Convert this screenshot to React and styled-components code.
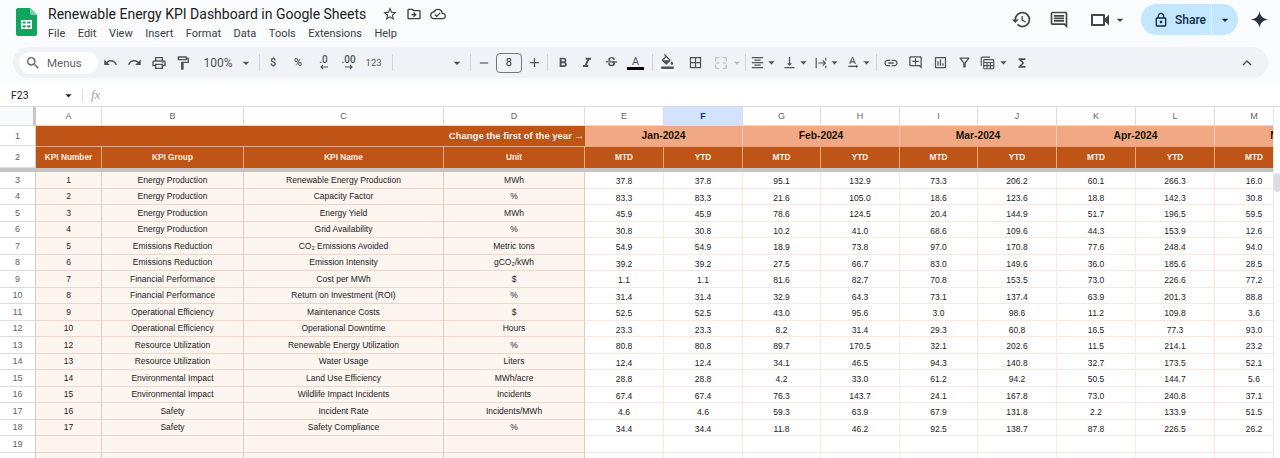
import styled, { createGlobalStyle } from "styled-components";
import {
  MdAdd,
  MdArrowDropDown,
  MdBorderAll,
  MdExpandLess,
  MdFormatAlignCenter,
  MdFormatBold,
  MdFormatColorFill,
  MdFormatItalic,
  MdFunctions,
  MdHistory,
  MdLink,
  MdLockOutline,
  MdOutlineAddComment,
  MdOutlineCloudDone,
  MdOutlineComment,
  MdOutlineDriveFileMove,
  MdOutlineFilterAlt,
  MdOutlineFormatPaint,
  MdOutlineInsertChart,
  MdOutlinePrint,
  MdOutlineStarBorder,
  MdOutlineTextRotationNone,
  MdOutlineVideocam,
  MdRedo,
  MdRemove,
  MdSearch,
  MdStrikethroughS,
  MdUndo,
  MdVerticalAlignBottom,
} from "react-icons/md";

const MENUS = ["File", "Edit", "View", "Insert", "Format", "Data", "Tools", "Extensions", "Help"];
const COLUMNS = ["A", "B", "C", "D", "E", "F", "G", "H", "I", "J", "K", "L", "M"];
const MONTHS = ["Jan-2024", "Feb-2024", "Mar-2024", "Apr-2024", "May-2024"];
const KPI_HEADS = ["KPI Number", "KPI Group", "KPI Name", "Unit"];

const ROWS = [
  [1, "Energy Production", "Renewable Energy Production", "MWh", "37.8 37.8 95.1 132.9 73.3 206.2 60.1 266.3 16.0"],
  [2, "Energy Production", "Capacity Factor", "%", "83.3 83.3 21.6 105.0 18.6 123.6 18.8 142.3 30.8"],
  [3, "Energy Production", "Energy Yield", "MWh", "45.9 45.9 78.6 124.5 20.4 144.9 51.7 196.5 59.5"],
  [4, "Energy Production", "Grid Availability", "%", "30.8 30.8 10.2 41.0 68.6 109.6 44.3 153.9 12.6"],
  [5, "Emissions Reduction", "CO₂ Emissions Avoided", "Metric tons", "54.9 54.9 18.9 73.8 97.0 170.8 77.6 248.4 94.0"],
  [6, "Emissions Reduction", "Emission Intensity", "gCO₂/kWh", "39.2 39.2 27.5 66.7 83.0 149.6 36.0 185.6 28.5"],
  [7, "Financial Performance", "Cost per MWh", "$", "1.1 1.1 81.6 82.7 70.8 153.5 73.0 226.6 77.2"],
  [8, "Financial Performance", "Return on Investment (ROI)", "%", "31.4 31.4 32.9 64.3 73.1 137.4 63.9 201.3 88.8"],
  [9, "Operational Efficiency", "Maintenance Costs", "$", "52.5 52.5 43.0 95.6 3.0 98.6 11.2 109.8 3.6"],
  [10, "Operational Efficiency", "Operational Downtime", "Hours", "23.3 23.3 8.2 31.4 29.3 60.8 16.5 77.3 93.0"],
  [12, "Resource Utilization", "Renewable Energy Utilization", "%", "80.8 80.8 89.7 170.5 32.1 202.6 11.5 214.1 23.2"],
  [13, "Resource Utilization", "Water Usage", "Liters", "12.4 12.4 34.1 46.5 94.3 140.8 32.7 173.5 52.1"],
  [14, "Environmental Impact", "Land Use Efficiency", "MWh/acre", "28.8 28.8 4.2 33.0 61.2 94.2 50.5 144.7 5.6"],
  [15, "Environmental Impact", "Wildlife Impact Incidents", "Incidents", "67.4 67.4 76.3 143.7 24.1 167.8 73.0 240.8 37.1"],
  [16, "Safety", "Incident Rate", "Incidents/MWh", "4.6 4.6 59.3 63.9 67.9 131.8 2.2 133.9 51.5"],
  [17, "Safety", "Safety Compliance", "%", "34.4 34.4 11.8 46.2 92.5 138.7 87.8 226.5 26.2"],
];

const SheetsLogo = () => (
  <svg width="21" height="28" viewBox="0 0 21 28">
    <path d="M2 0h12l7 7v19a2 2 0 0 1-2 2H2a2 2 0 0 1-2-2V2a2 2 0 0 1 2-2z" fill="#0fa55f" />
    <path d="M14 0l7 7h-5a2 2 0 0 1-2-2z" fill="#7fd0a6" />
    <path d="M5 12h11v9H5zM6.600 13.500v2.100h3.100v-2.100zm4.700 0v2.100h3.100v-2.100zm-4.700 3.700v2.300h3.100v-2.300zm4.700 0v2.300h3.100v-2.300z" fill="#fff" fillRule="evenodd" />
  </svg>
);

const Sparkle = () => (
  <svg width="17" height="17" viewBox="0 0 20 20">
    <path d="M10 0c.7 5.600 3.900 9 10 10-6.100 1-9.300 4.400-10 10-.7-5.600-3.900-9-10-10 6.100-1 9.300-4.400 10-10z" fill="#2a3440" />
  </svg>
);

const MergeIcon = () => (
  <svg width="14" height="14" viewBox="0 0 16 16" fill="none" stroke="#b9bcc0" strokeWidth="1.300">
    <path d="M6 2H2v4M10 2h4v4M6 14H2v-4M10 14h4v-4M2 8h4M10 8h4" />
  </svg>
);

const WrapIcon = () => (
  <svg width="14" height="14" viewBox="0 0 16 16" fill="none" stroke="#505356" strokeWidth="1.300">
    <path d="M2.500 2v12M13.500 2v3M13.500 11v3M5 8h8M10 5l3 3-3 3" />
  </svg>
);

const CalcIcon = () => (
  <svg width="15" height="15" viewBox="0 0 18 18" fill="none" stroke="#505356" strokeWidth="1.400">
    <path d="M1.500 13V3.500a1 1 0 0 1 1-1H12" />
    <rect x="4.500" y="5.500" width="12" height="11" rx="1" />
    <path d="M4.500 9h12M8.500 9v7.500M12.500 9v7.500M4.500 12.700h12" />
  </svg>
);

const ArrowLeftSmall = () => (
  <svg width="10" height="6" viewBox="0 0 10 6" fill="none" stroke="#505356" strokeWidth="1.100">
    <path d="M9 3H2M4 1L2 3l2 2" />
  </svg>
);

const ArrowRightSmall = () => (
  <svg width="10" height="6" viewBox="0 0 10 6" fill="none" stroke="#505356" strokeWidth="1.100">
    <path d="M1 3h7M6 1l2 2-2 2" />
  </svg>
);

const App = () => {
  return (
    <Page>
      <GlobalStyle />
      <Chrome>
        <TitleBar>
          <LogoSlot>
            <SheetsLogo />
          </LogoSlot>
          <TitleBlock>
            <TitleRow>
              <DocTitle>Renewable Energy KPI Dashboard in Google Sheets</DocTitle>
              <TitleIcons>
                <MdOutlineStarBorder size={16} />
                <MdOutlineDriveFileMove size={16} />
                <MdOutlineCloudDone size={16} />
              </TitleIcons>
            </TitleRow>
            <MenuBar>
              {MENUS.map((menu) => (
                <MenuItem key={menu}>{menu}</MenuItem>
              ))}
            </MenuBar>
          </TitleBlock>
          <Actions>
            <ActionIcon>
              <MdHistory size={21} />
            </ActionIcon>
            <ActionIcon>
              <MdOutlineComment size={20} />
            </ActionIcon>
            <MeetButton>
              <MdOutlineVideocam size={24} />
              <MdArrowDropDown size={16} />
            </MeetButton>
            <ShareButton>
              <ShareMain>
                <MdLockOutline size={16} />
                <span>Share</span>
              </ShareMain>
              <ShareCaret>
                <MdArrowDropDown size={16} />
              </ShareCaret>
            </ShareButton>
            <SparkleSlot>
              <Sparkle />
            </SparkleSlot>
          </Actions>
        </TitleBar>

        <Toolbar>
          <SearchPill>
            <MdSearch size={16} />
            <span>Menus</span>
          </SearchPill>
          <ToolBtn><MdUndo size={15} /></ToolBtn>
          <ToolBtn><MdRedo size={15} /></ToolBtn>
          <ToolBtn><MdOutlinePrint size={16} /></ToolBtn>
          <ToolBtn><MdOutlineFormatPaint size={16} /></ToolBtn>
          <ZoomLabel>100%</ZoomLabel>
          <Caret $w={16}><MdArrowDropDown size={16} /></Caret>
          <Divider />
          <ToolText $w={25}>$</ToolText>
          <ToolText $w={25}>%</ToolText>
          <Decimal $w={26}>
            <span>.0</span>
            <ArrowLeftSmall />
          </Decimal>
          <Decimal $w={24}>
            <span>.00</span>
            <ArrowRightSmall />
          </Decimal>
          <ToolText $w={26} $small>123</ToolText>
          <Divider />
          <FontPicker>
            <MdArrowDropDown size={16} />
          </FontPicker>
          <Divider />
          <ToolBtn><MdRemove size={14} /></ToolBtn>
          <SizeBox>8</SizeBox>
          <ToolBtn><MdAdd size={15} /></ToolBtn>
          <Divider $left={1} $right={2} />
          <ToolBtn><MdFormatBold size={16} /></ToolBtn>
          <ToolBtn><MdFormatItalic size={16} /></ToolBtn>
          <ToolBtn><MdStrikethroughS size={15} /></ToolBtn>
          <ToolBtn><ColorA>A</ColorA></ToolBtn>
          <Divider $left={4} />
          <ToolBtn $w={28}>
            <FillStack>
              <MdFormatColorFill size={15} />
              <FillBar />
            </FillStack>
          </ToolBtn>
          <ToolBtn $w={28}><MdBorderAll size={15} /></ToolBtn>
          <ToolBtn $w={22}><MergeIcon /></ToolBtn>
          <Caret $w={10} $off><MdArrowDropDown size={14} /></Caret>
          <Divider $left={3} $right={2} />
          <ToolBtn $w={20}><MdFormatAlignCenter size={15} /></ToolBtn>
          <PairCaret><MdArrowDropDown size={15} /></PairCaret>
          <ToolBtn $w={20}><MdVerticalAlignBottom size={15} /></ToolBtn>
          <PairCaret><MdArrowDropDown size={15} /></PairCaret>
          <ToolBtn $w={20}><WrapIcon /></ToolBtn>
          <PairCaret><MdArrowDropDown size={15} /></PairCaret>
          <ToolBtn $w={20}><MdOutlineTextRotationNone size={15} /></ToolBtn>
          <PairCaret><MdArrowDropDown size={15} /></PairCaret>
          <Divider $left={2} $right={2} />
          <ToolBtn><MdLink size={16} /></ToolBtn>
          <ToolBtn><MdOutlineAddComment size={15} /></ToolBtn>
          <ToolBtn><MdOutlineInsertChart size={15} /></ToolBtn>
          <ToolBtn><MdOutlineFilterAlt size={15} /></ToolBtn>
          <ToolBtn $w={21}><CalcIcon /></ToolBtn>
          <Caret $w={12}><MdArrowDropDown size={15} /></Caret>
          <ToolBtn $w={24}><MdFunctions size={14} /></ToolBtn>
          <ToolbarEnd>
            <MdExpandLess size={18} />
          </ToolbarEnd>
        </Toolbar>
      </Chrome>

      <FormulaBar>
        <NameBox>
          <span>F23</span>
          <MdArrowDropDown size={15} />
        </NameBox>
        <FormulaDivider />
        <FxMark>fx</FxMark>
      </FormulaBar>

      <SheetArea>
        <Viewport>
          <Grid>
            <Corner />
            {COLUMNS.map((col) => (
              <ColHead key={col} $active={col === "F"}>
                {col}
              </ColHead>
            ))}
            <ColHead />

            <RowHead>1</RowHead>
            <ChangeCell>Change the first of the year →</ChangeCell>
            {MONTHS.map((month) => (
              <MonthCell key={month}>{month}</MonthCell>
            ))}

            <RowHead>2</RowHead>
            {KPI_HEADS.map((head) => (
              <HeadCell key={head}>{head}</HeadCell>
            ))}
            {COLUMNS.slice(4).map((col, i) => (
              <HeadCell key={col}>{i % 2 === 0 ? "MTD" : "YTD"}</HeadCell>
            ))}
            <HeadCell />

            <FreezeBand />

            {ROWS.map((row, i) => (
              <DataRow key={row[0]} rowNumber={i + 3} row={row} />
            ))}
            <EmptyRow rowNumber={19} />
            <EmptyRow />
          </Grid>
        </Viewport>
        <ScrollRail>
          <ScrollThumb />
        </ScrollRail>
      </SheetArea>
    </Page>
  );
};

const DataRow = ({ rowNumber, row }) => {
  const [kpi, group, name, unit, values] = row;
  return (
    <>
      <RowHead>{rowNumber}</RowHead>
      <KpiCell>{kpi}</KpiCell>
      <KpiCell>{group}</KpiCell>
      <KpiCell>{name}</KpiCell>
      <KpiCell>{unit}</KpiCell>
      {values.split(" ").map((value, i) => (
        <ValueCell key={COLUMNS[i + 4]}>{value}</ValueCell>
      ))}
      <ValueCell />
    </>
  );
};

const EmptyRow = ({ rowNumber }) => (
  <>
    <RowHead>{rowNumber}</RowHead>
    {COLUMNS.slice(0, 4).map((col) => (
      <KpiCell key={col} />
    ))}
    {COLUMNS.slice(4).map((col) => (
      <ValueCell key={col} />
    ))}
    <ValueCell />
  </>
);

export default App;

const GlobalStyle = createGlobalStyle`
  html, body {
    margin: 0;
    padding: 0;
    background: #fff;
  }
  * {
    box-sizing: border-box;
  }
`;

const Page = styled.div`
  width: 1280px;
  height: 458px;
  overflow: hidden;
  background: #fff;
  font-family: "Roboto", sans-serif;
  color: #1f1f1f;
`;

const Chrome = styled.div`
  height: 84px;
  background: #f9fbfd;
`;

const TitleBar = styled.div`
  height: 47px;
  display: flex;
`;

const LogoSlot = styled.div`
  width: 48px;
  padding: 8px 0 0 16px;
`;

const TitleBlock = styled.div`
  display: flex;
  flex-direction: column;
  padding-top: 4px;
`;

const TitleRow = styled.div`
  display: flex;
  align-items: center;
  height: 20px;
`;

const DocTitle = styled.div`
  width: 321px;
  font-size: 14px;
  white-space: nowrap;
  color: #202124;
`;

const TitleIcons = styled.div`
  display: flex;
  gap: 8px;
  margin-left: 13px;
  color: #3c4043;
`;

const MenuBar = styled.div`
  display: flex;
  gap: 12.500px;
  height: 18px;
  align-items: center;
`;

const MenuItem = styled.span`
  font-size: 11px;
  color: #3c4043;
`;

const Actions = styled.div`
  margin-left: auto;
  display: flex;
  align-items: flex-start;
  padding: 4px 6px 0 0;
  color: #444746;
`;

const ActionIcon = styled.div`
  width: 38px;
  height: 31px;
  display: flex;
  align-items: center;
  justify-content: center;
`;

const MeetButton = styled.div`
  width: 60px;
  height: 31px;
  display: flex;
  align-items: center;
  justify-content: center;
`;

const ShareButton = styled.div`
  width: 97px;
  height: 31px;
  margin-left: 3px;
  display: flex;
  border-radius: 16px;
  background: #c2e7ff;
  color: #0b2a45;
`;

const ShareMain = styled.div`
  width: 71px;
  display: flex;
  align-items: center;
  gap: 6px;
  padding-left: 12px;
  font-size: 12px;
  font-weight: 500;
  border-right: 1px solid #e3f3fd;
`;

const ShareCaret = styled.div`
  flex: 1;
  display: flex;
  align-items: center;
  justify-content: center;
`;

const SparkleSlot = styled.div`
  width: 30px;
  height: 31px;
  margin-left: 6px;
  display: flex;
  align-items: center;
  justify-content: center;
`;

const Toolbar = styled.div`
  height: 31px;
  margin: 0 12px 0 13px;
  padding-left: 6px;
  display: flex;
  align-items: center;
  border-radius: 16px;
  background: #eff3f8;
  color: #505356;
`;

const SearchPill = styled.div`
  width: 79px;
  height: 22px;
  padding-left: 6px;
  display: flex;
  align-items: center;
  gap: 6px;
  border-radius: 11px;
  background: #fff;
  font-size: 11.500px;
  color: #5f6368;
`;

const ToolBtn = styled.div`
  flex: none;
  width: ${(p) => p.$w || 24.4}px;
  height: 24px;
  display: flex;
  align-items: center;
  justify-content: center;
`;

const ToolText = styled(ToolBtn)`
  font-size: ${(p) => (p.$small ? 9.5 : 11)}px;
  font-weight: ${(p) => (p.$small ? 400 : 500)};
`;

const Decimal = styled(ToolBtn)`
  flex-direction: column;
  line-height: 8px;
  font-size: 10px;
  font-weight: 500;
`;

const ZoomLabel = styled.div`
  width: 42px;
  padding-left: 8px;
  font-size: 12px;
  color: #505356;
`;

const Caret = styled.div`
  flex: none;
  width: ${(p) => p.$w}px;
  display: flex;
  align-items: center;
  justify-content: center;
  color: ${(p) => (p.$off ? "#b9bcc0" : "#505356")};
  svg {
    flex: none;
  }
`;

const PairCaret = styled(Caret)`
  width: 11.600px;
  margin: 0 2px 0 -2px;
`;

const Divider = styled.div`
  flex: none;
  width: 1px;
  height: 17px;
  margin: 0 ${(p) => p.$right ?? 1}px 0 ${(p) => p.$left ?? 5}px;
  background: #d3d6da;
`;

const FontPicker = styled.div`
  flex: none;
  width: 71px;
  display: flex;
  justify-content: flex-end;
`;

const SizeBox = styled.div`
  flex: none;
  width: 26px;
  height: 20px;
  display: flex;
  align-items: center;
  justify-content: center;
  border: 1px solid #747775;
  border-radius: 4px;
  font-size: 11px;
  color: #1f1f1f;
`;

const ColorA = styled.span`
  width: 17px;
  text-align: center;
  font-size: 11px;
  line-height: 11px;
  border-bottom: 3px solid #000;
`;

const FillStack = styled.div`
  display: flex;
  flex-direction: column;
  align-items: center;
`;

const FillBar = styled.div`
  width: 18px;
  height: 3px;
  background: #fff;
`;

const ToolbarEnd = styled.div`
  margin-left: auto;
  margin-right: 12px;
  display: flex;
`;

const FormulaBar = styled.div`
  height: 23px;
  display: flex;
  align-items: center;
  padding-left: 11px;
  border-bottom: 1px solid #dadce0;
`;

const NameBox = styled.div`
  width: 65px;
  display: flex;
  align-items: center;
  justify-content: space-between;
  font-size: 10.500px;
  color: #202124;
`;

const FormulaDivider = styled.div`
  width: 1px;
  height: 13px;
  margin-left: 6px;
  background: #dadce0;
`;

const FxMark = styled.span`
  margin-left: 8px;
  font-family: "Liberation Serif", serif;
  font-style: italic;
  font-size: 13px;
  color: #a0a4a8;
`;

const SheetArea = styled.div`
  display: flex;
  height: 351px;
`;

const Viewport = styled.div`
  width: 1273px;
  overflow: hidden;
`;

const Grid = styled.div`
  width: 1373px;
  display: grid;
  grid-template-columns: 36px 66px 142px 200px 141px 79px 79px 78px 79px 78px 79px 79px 79px 79px 79px;
  grid-template-rows: 19px 20px 22px 4px;
  grid-auto-rows: 16.530px;
  font-family: "Liberation Sans", Arial, sans-serif;
`;

const Cell = styled.div`
  display: flex;
  align-items: center;
  justify-content: center;
  min-width: 0;
  white-space: nowrap;
  overflow: hidden;
`;

const Corner = styled.div`
  background: #f8f9fa;
  border-right: 3px solid #c7c7c7;
  border-bottom: 1px solid #dadce0;
`;

const ColHead = styled(Cell)`
  font-size: 9px;
  font-weight: ${(p) => (p.$active ? 700 : 400)};
  color: ${(p) => (p.$active ? "#0b3a75" : "#5f6368")};
  background: ${(p) => (p.$active ? "#d3e3fd" : "#fff")};
  border-right: 1px solid #dadce0;
  border-bottom: 1px solid #dadce0;
`;

const RowHead = styled(Cell)`
  grid-column: 1;
  font-size: 9px;
  color: #5f6368;
  background: #fff;
  border-bottom: 1px solid #dadce0;
  border-right: 1px solid #c9ccd0;
`;

const ChangeCell = styled(Cell)`
  grid-column: span 4;
  justify-content: flex-end;
  padding: 0 1px 1px 0;
  font-size: 9.500px;
  font-weight: 700;
  color: #fbeee6;
  background: #be5416;
`;

const MonthCell = styled(Cell)`
  grid-column: span 2;
  padding-bottom: 1px;
  font-size: 10.300px;
  font-weight: 700;
  color: #1a1208;
  background: #f0a984;
  border-right: 1px solid #f6c9b0;
`;

const HeadCell = styled(Cell)`
  padding-bottom: 1px;
  font-size: 8.300px;
  font-weight: 700;
  color: #fdf1e9;
  background: #be5416;
  border-top: 1px solid #eda57f;
  border-right: 1px solid #eda57f;
`;

const FreezeBand = styled.div`
  grid-column: 1 / -1;
  background: #c7c3c1;
`;

const KpiCell = styled(Cell)`
  font-size: 8.500px;
  color: #222;
  background: #fdf5ef;
  border-right: 1px solid #e6cbbb;
  border-bottom: 1px solid #ecd7ca;
`;

const ValueCell = styled(Cell)`
  padding-top: 3px;
  font-size: 8.500px;
  color: #222;
  background: #fff;
  border-right: 1px solid #fae9df;
  border-bottom: 1px solid #f9e8de;
`;

const ScrollRail = styled.div`
  flex: 1;
  padding-top: 66px;
  background: #fff;
  border-left: 1px solid #e6e6e6;
`;

const ScrollThumb = styled.div`
  width: 6px;
  height: 19px;
  border-radius: 3px;
  background: #dadce0;
`;
